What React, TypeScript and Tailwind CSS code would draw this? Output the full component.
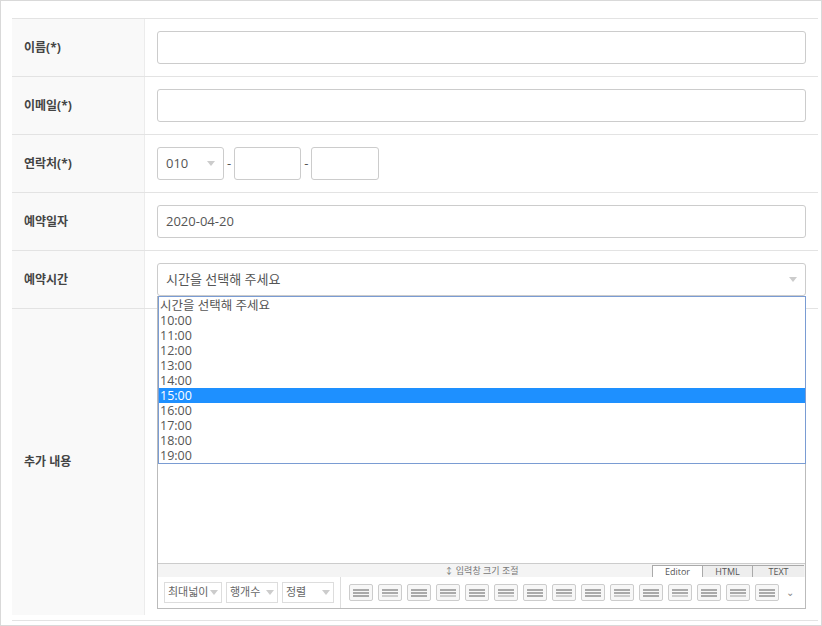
import React from "react";

const F = { fontFamily: '"Open Sans","Noto Sans CJK KR",sans-serif' };

function Row({ label, h = "h-[58px]", children }: { label: string; h?: string; children: React.ReactNode }) {
  return (
    <div className={`flex border-b border-[#e3e3e3] ${h}`}>
      <div className="w-[133px] shrink-0 bg-[#f9f9f9] border-r border-[#ececec] flex items-center pl-[12px] text-[12px] font-bold text-[#444]">{label}</div>
      <div className="flex-1 flex items-center pl-[12px] pr-[12px]">{children}</div>
    </div>
  );
}

const Caret = () => <span className="w-0 h-0 border-l-[4px] border-r-[4px] border-t-[5px] border-l-transparent border-r-transparent border-t-[#ccc]" />;

function Bar({ i }: { i: number }) {
  return (
    <div className="w-[24px] h-[17px] border border-[#ccc] rounded-[2px] bg-[#f7f7f7] flex flex-col justify-center gap-[1px] px-[3px]">
      <div className="h-[2px] bg-[#aaa]" />
      <div className="h-[2px] bg-[#aaa]" />
      <div className={`h-[2px] ${i % 2 ? "bg-[#ccc]" : "bg-[#aaa]"}`} />
    </div>
  );
}

export default function App() {
  const times = ["10:00", "11:00", "12:00", "13:00", "14:00", "15:00", "16:00", "17:00", "18:00", "19:00"];
  return (
    <div style={F} className="w-[822px] h-[626px] bg-white border border-[#d9d9d9] relative overflow-hidden">
      <div className="mt-[17px] ml-[11px] w-[806px] border-t border-[#e3e3e3]">
        <Row label="이름(*)"><div className="w-full h-[33px] border border-[#ccc] rounded-[3px]" /></Row>
        <Row label="이메일(*)"><div className="w-full h-[33px] border border-[#ccc] rounded-[3px]" /></Row>
        <Row label="연락처(*)">
          <div className="flex items-center gap-[3px] text-[13px] text-[#555]">
            <div className="w-[67px] h-[33px] border border-[#ccc] rounded-[3px] flex items-center justify-between px-[8px]"><span>010</span><Caret /></div>
            <span>-</span>
            <div className="w-[67px] h-[33px] border border-[#ccc] rounded-[3px]" />
            <span>-</span>
            <div className="w-[68px] h-[33px] border border-[#ccc] rounded-[3px]" />
          </div>
        </Row>
        <Row label="예약일자"><div className="w-full h-[33px] border border-[#ccc] rounded-[3px] flex items-center px-[8px] text-[13px] text-[#555]">2020-04-20</div></Row>
        <Row label="예약시간"><div className="w-full h-[33px] border border-[#ccc] rounded-[3px] flex items-center justify-between px-[8px] text-[13px] text-[#555]"><span>시간을 선택해 주세요</span><Caret /></div></Row>
        <div className="flex h-[306px]">
          <div className="w-[133px] shrink-0 bg-[#f9f9f9] border-r border-[#ececec] flex items-center pl-[12px] text-[12px] font-bold text-[#444]">추가 내용</div>
          <div className="flex-1 pl-[12px] pr-[12px]">
            <div className="-mt-[13px] h-[313px] border border-[#bbb] flex flex-col">
              <div className="flex-1" />
              <div className="h-[14px] border-t border-[#ccc] bg-[#f4f4f4] relative flex items-center justify-center text-[9px] text-[#777]">
                ↕ 입력창 크기 조절
                <div className="absolute right-[1px] bottom-0 flex text-[9px] text-[#555]">
                  <span className="w-[50px] h-[12px] bg-white border-l border-t border-[#aaa] text-center leading-[11px]">Editor</span>
                  <span className="w-[50px] h-[12px] border-l border-t border-[#aaa] bg-[#eee] text-center leading-[11px]">HTML</span>
                  <span className="w-[52px] h-[12px] border-l border-t border-[#aaa] bg-[#eee] text-center leading-[11px]">TEXT</span>
                </div>
              </div>
              <div className="h-[31px] flex items-center bg-white">
                <div className="flex gap-[4px] px-[6px] items-center border-r border-[#ddd] h-full text-[11px] text-[#666]">
                  <div className="w-[58px] h-[21px] border border-[#ddd] flex items-center justify-between px-[3px]">최대넓이<Caret /></div>
                  <div className="w-[52px] h-[21px] border border-[#ddd] flex items-center justify-between px-[3px]">행개수<Caret /></div>
                  <div className="w-[52px] h-[21px] border border-[#ddd] flex items-center justify-between px-[3px]">정렬<Caret /></div>
                </div>
                <div className="flex gap-[5px] pl-[8px] items-center">
                  {Array.from({ length: 15 }).map((_, i) => <Bar key={i} i={i} />)}
                  <span className="text-[#888] text-[10px] ml-[2px]">⌄</span>
                </div>
              </div>
            </div>
          </div>
        </div>
        <div className="h-[6px] border-b border-[#e3e3e3]" />
      </div>
      <div className="absolute left-[157px] top-[295px] w-[648px] h-[168px] border border-[#7a9cd3] bg-white text-[12.5px] text-[#555] leading-[15px] py-[1px]">
        <div className="px-[1px] h-[15px]">시간을 선택해 주세요</div>
        {times.map(t => (
          <div key={t} className={`px-[1px] h-[15px] ${t === "15:00" ? "bg-[#1e90ff] text-white" : ""}`}>{t}</div>
        ))}
      </div>
    </div>
  );
}
